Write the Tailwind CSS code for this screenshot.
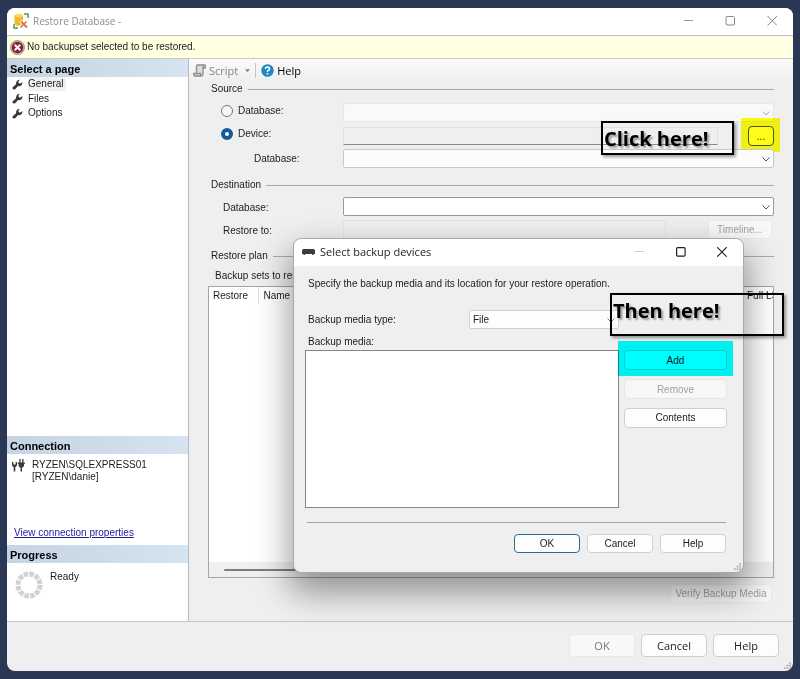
<!DOCTYPE html>
<html lang="en">
<head>
<meta charset="utf-8">
<meta name="viewport" content="width=device-width, initial-scale=1">
<title>Restore Database</title>
<script src="https://cdn.jsdelivr.net/npm/@tailwindcss/browser@4"></script>
</head>
<body class="bg-[#2a3855] font-['Liberation_Sans',Arial,sans-serif] text-[10px] leading-[14px] text-[#1c1c1c]">
<svg class="hidden" aria-hidden="true">
  <symbol id="wrench" viewBox="0 0 12 12"><path d="M.8 9 4.500 5.800C4 3 5.800.7 8.600.7L7 2.600l.4 1.900 1.900.4L11.300 3.300c.4 2.900-1.800 4.900-4.600 4.400L3.400 11.200C1.800 12.300-.4 10.600.8 9z" fill="#383838"/></symbol>
  <symbol id="chevron" viewBox="0 0 10 10"><path d="M1.500 3.500 5 7 8.500 3.500" fill="none" stroke="currentColor"/></symbol>
  <symbol id="grip" viewBox="0 0 10 10"><path d="M7 1h2v2H7zM4 4h2v2H4zM7 4h2v2H7zM1 7h2v2H1zM4 7h2v2H4zM7 7h2v2H7z" fill="#b4b4b4"/></symbol>
</svg>

<div class="relative flex min-h-screen flex-col px-[7px] pt-2 pb-2">
  <main class="flex flex-1 flex-col overflow-hidden rounded-lg bg-[#efefef]">
    <header class="flex h-7 items-center border-b border-[#bdbdbd] bg-white pb-0.5 pl-1.5 font-['Open_Sans','Noto_Sans',sans-serif] text-[#8c8c8c]">
      <svg class="mr-1 h-4 w-4" viewBox="0 0 16 16" aria-hidden="true">
        <path d="M11 1h4v4M1 11v4h4" fill="none" stroke="#4c9a6a" stroke-width="1.500"/>
        <path d="M1.500 2.500v8.500c0 2.200 8.500 2.200 8.500 0V2.500z" fill="#f3b62a"/><ellipse cx="5.750" cy="2.500" rx="4.250" ry="1.700" fill="#ffd75e"/>
        <path d="m7.500 8 6.500 6.500M14 8l-6.500 6.500" stroke="#fff" stroke-width="3.200"/><path d="m8 8.500 6 6" stroke="#e2701e" stroke-width="1.800"/><path d="m13.500 8.500-6 6" stroke="#d07a3a" stroke-width="1.600"/>
      </svg>
      <h1 class="flex-1">Restore Database -</h1>
      <button class="flex w-[42px] justify-center" aria-label="Minimize"><svg class="h-[10px] w-[10px]" viewBox="0 0 10 10"><path d="M1 4.500h9" stroke="#999"/></svg></button>
      <button class="flex w-[42px] justify-center" aria-label="Maximize"><svg class="h-[10px] w-[10px]" viewBox="0 0 10 10"><rect x="1" y=".5" width="8.500" height="8.500" rx="1" fill="none" stroke="#888"/></svg></button>
      <button class="flex w-[42px] justify-center" aria-label="Close"><svg class="h-[10px] w-[10px]" viewBox="0 0 10 10"><path d="m.5 0 9.500 9.500M10 0 .5 9.500" stroke="#888"/></svg></button>
    </header>
    <div role="status" class="flex h-[23px] items-center gap-0.5 border-b border-[#c9c9bd] bg-[#ffffe1] pl-[3px]">
      <svg class="h-[15px] w-[15px]" viewBox="0 0 14 14" aria-hidden="true"><circle cx="7" cy="7" r="6.500" fill="#c9b5b7" stroke="#8b8587" stroke-width=".8"/><circle cx="7" cy="7" r="5.300" fill="#8f1c2c"/><path d="m4.400 4.400 5.200 5.200M9.600 4.400 4.400 9.600" stroke="#fff" stroke-width="1.900"/></svg>
      <p>No backupset selected to be restored.</p>
    </div>

    <div class="flex flex-1">
      <aside class="flex w-[182px] flex-col border-r border-[#b5b9c0] bg-white">
        <h2 class="h-[18px] bg-linear-to-r from-[#c5d4e3] to-[#d6e3f0] pl-[3px] text-[11px] leading-5 font-bold text-black">Select a page</h2>
        <nav class="flex flex-1 flex-col items-start">
          <a href="#general" class="flex items-center gap-[5px] pl-[5px]"><svg class="h-[11px] w-[11px]"><use href="#wrench"/></svg><span class="bg-[#f0f0f0] pr-0.5">General</span></a>
          <a href="#files" class="flex items-center gap-[5px] pl-[5px] leading-[15px]"><svg class="h-[11px] w-[11px]"><use href="#wrench"/></svg>Files</a>
          <a href="#options" class="flex items-center gap-[5px] pl-[5px]"><svg class="h-[11px] w-[11px]"><use href="#wrench"/></svg>Options</a>
        </nav>
        <section class="flex h-[109px] flex-col">
          <h2 class="h-[18px] bg-linear-to-r from-[#c5d4e3] to-[#d6e3f0] pl-[3px] text-[11px] leading-5 font-bold text-black">Connection</h2>
          <div class="flex flex-1 gap-[7px] pt-[5px] pl-[5px] leading-3">
            <svg class="h-[13px] w-[13px]" viewBox="0 0 13 13" aria-hidden="true"><path d="M0 3h1.400v2.500h2.200V3H5v3.500L3.300 8.300V12.500H1.700V8.300L0 6.500zM5.800 3.500h7V5H12v2.300L10 8.800v3.700H8.500V8.800L6.600 7.300V5h-.8zM7.300 0h1.300v3.500H7.300zM10.200 0h1.300v3.500h-1.300z" fill="#3a3a3a"/></svg>
            <p>RYZEN\SQLEXPRESS01<br>[RYZEN\danie]</p>
          </div>
          <a href="#connection" class="mb-[5px] self-start pl-[7px] text-[#1c1c96] underline">View connection properties</a>
        </section>
        <section class="h-[76px]">
          <h2 class="h-[18px] bg-linear-to-r from-[#c5d4e3] to-[#d6e3f0] pl-[3px] text-[11px] leading-5 font-bold text-black">Progress</h2>
          <div class="flex gap-[7px] pt-[7px] pl-2">
            <svg class="mt-px h-7 w-7" viewBox="0 0 28 28" aria-hidden="true"><circle cx="14" cy="14" r="11" fill="none" stroke="#d2d2d2" stroke-width="5" stroke-dasharray="4.560 1.200"/></svg>
            <p>Ready</p>
          </div>
        </section>
      </aside>

      <section class="flex flex-1 flex-col">
        <div class="flex h-[23px] items-center bg-linear-to-b from-[#fafafa] to-[#efefef] pl-1 font-['Open_Sans','Noto_Sans',sans-serif] text-[11px] text-[#858585]" role="toolbar">
          <button class="flex items-center gap-[3px]"><svg class="h-[13px] w-[13px]" viewBox="0 0 13 13" aria-hidden="true"><path d="M3.500 9V2.500Q3.500 1 5 1h6.500Q10 1.500 10 3v7.500Q10 12 8.500 12H2Q.7 12 .7 10.500V9.500H7.500Q7.500 12 8.800 12M10 4h2.500V2.200Q12.500 1 11.500 1" fill="#dcdcdc" stroke="#8c8c8c" stroke-width="1.300"/></svg>Script</button>
          <svg class="ml-[7px] h-[5px] w-[5px]" viewBox="0 0 6 6" aria-hidden="true"><path d="M0 1.500h6L3 5z" fill="#888"/></svg>
          <span class="mx-[5px] h-[15px] w-px bg-[#c4c4c4]"></span>
          <button class="flex items-center gap-[3px] text-black"><svg class="h-[13px] w-[13px]" viewBox="0 0 13 13" aria-hidden="true"><circle cx="6.500" cy="6.500" r="6.300" fill="#2289c2"/><path d="M4.500 5Q4.500 3 6.500 3t2 1.900Q8.500 5.900 6.500 6.900V8" fill="none" stroke="#fff" stroke-width="1.500"/><path d="M5.700 9h1.600v1.500H5.700z" fill="#fff"/></svg>Help</button>
        </div>

        <div class="flex flex-1 flex-col pr-[19px] pb-[18px] pl-[19px]">
          <h3 class="flex items-center gap-[5px] pl-[3px]">Source<span class="h-px flex-1 bg-[#ababab]"></span></h3>
          <div class="grid grid-cols-[135px_1fr] items-center gap-y-1 pt-[7px]">
            <label for="src-db" class="flex items-center gap-[5px] pb-1 pl-[13px]"><input id="src-db" name="source" type="radio" class="h-3 w-3 appearance-none rounded-full border border-[#777] bg-[#f6f6f6]">Database:</label>
            <div class="relative h-[19px]"><select aria-label="Source database" disabled class="h-full w-full appearance-none rounded-xs border border-[#e8e8e8] bg-[#f9f9f9]"></select><svg class="absolute top-[5px] right-[3px] h-[10px] w-[10px] text-[#aaa]"><use href="#chevron"/></svg></div>

            <label for="src-dev" class="flex items-center gap-[5px] pb-1 pl-[13px]"><input id="src-dev" name="source" type="radio" checked class="h-3 w-3 appearance-none rounded-full border-4 border-[#15599c] bg-white">Device:</label>
            <div class="flex h-[19px] items-center">
              <input aria-label="Device" readonly class="h-[18px] min-w-0 flex-1 border border-[#e2e2e2] border-b-[#8a8a8a] bg-[#efefef]">
              <div class="relative ml-[30px] h-5">
                <button class="h-5 w-[26px] rounded border border-[#4a5a4a] bg-[#fdfdfd] pt-0.5" aria-label="Browse devices">...</button>
                <span class="pointer-events-none absolute -top-2 -right-[6px] -bottom-[6px] -left-[7px] bg-[#ffff00]/90 mix-blend-multiply"></span>
              </div>
            </div>

            <label for="dev-db" class="pl-[46px]">Database:</label>
            <div class="relative h-[19px]"><select id="dev-db" class="h-full w-full appearance-none rounded-xs border border-[#c9c9c9] bg-[#fcfcfc]"></select><svg class="absolute top-[5px] right-[3px] h-[10px] w-[10px] text-[#555]"><use href="#chevron"/></svg></div>
          </div>

          <h3 class="mt-[10px] flex items-center gap-[5px] pl-[3px]">Destination<span class="h-px flex-1 bg-[#ababab]"></span></h3>
          <div class="grid grid-cols-[135px_1fr] items-center gap-y-1 pt-[5px]">
            <label for="dest-db" class="pt-0.5 pl-[15px]">Database:</label>
            <div class="relative h-[19px]"><select id="dest-db" class="h-full w-full appearance-none rounded-xs border border-[#999] bg-white"></select><svg class="absolute top-[5px] right-[3px] h-[10px] w-[10px] text-[#555]"><use href="#chevron"/></svg></div>
            <label for="restore-to" class="pt-0.5 pl-[15px]">Restore to:</label>
            <div class="flex h-[19px] items-center gap-[42px]">
              <input id="restore-to" readonly class="h-full min-w-0 flex-1 border border-[#e4e4e4] bg-[#efefef]">
              <button disabled class="mr-0.5 h-[19px] w-[64px] rounded border border-[#eaeaea] bg-[#f8f8f8] text-[#a0a0a0]">Timeline...</button>
            </div>
          </div>

          <h3 class="mt-[10px] flex items-center gap-[5px] pl-[3px]">Restore plan<span class="h-px flex-1 bg-[#ababab]"></span></h3>
          <p class="mt-1.5 pl-[7px]">Backup sets to restore:</p>
          <div class="mt-[3px] flex flex-1 flex-col overflow-hidden border border-[#a5a5a5] bg-white">
            <table class="w-full table-fixed text-left">
              <thead><tr class="h-[18px]">
                <th class="w-[49px] border-r border-[#e2e2e2] pl-1 font-normal">Restore</th>
                <th class="pl-[5px] font-normal">Name</th>
                <th class="w-[26px] font-normal whitespace-nowrap">Full LSN</th>
              </tr></thead>
            </table>
            <div class="mt-auto flex h-[15px] items-center bg-[#efefef] pr-[60px] pl-[15px]"><span class="h-0.5 flex-1 rounded bg-[#7c7c7c]"></span></div>
          </div>
          <button disabled class="mt-1.5 mr-0.5 h-[19px] w-[102px] self-end rounded border border-[#eaeaea] bg-[#f6f6f6] text-[#a0a0a0]">Verify Backup Media</button>
        </div>
      </section>
    </div>

    <footer class="relative flex h-[50px] items-center justify-end gap-1.5 border-t border-[#c4c4c4] pr-[14px] pb-0.5 font-['Open_Sans','Noto_Sans',sans-serif] text-[11px]">
      <button disabled class="h-[23px] w-[66px] rounded border border-[#e8e8e8] bg-[#f8f8f8] text-[#777]">OK</button>
      <button class="h-[23px] w-[66px] rounded border border-[#cfcfcf] bg-[#fdfdfd]">Cancel</button>
      <button class="h-[23px] w-[66px] rounded border border-[#cfcfcf] bg-[#fdfdfd]">Help</button>
      <svg class="absolute right-px bottom-px h-[9px] w-[9px]" aria-hidden="true"><use href="#grip"/></svg>
    </footer>
  </main>

  <div role="dialog" aria-labelledby="dlg-title" class="absolute top-[238px] right-[56px] left-[293px] flex flex-col rounded-lg border border-[#a9a9a9] bg-[#efefef] shadow-[0_16px_32px_4px_rgba(0,0,0,0.38)]">
    <header class="flex h-[27px] items-center rounded-t-lg bg-white pr-px pb-px pl-2 font-['Open_Sans','Noto_Sans',sans-serif] text-[11px]">
      <svg class="mr-[5px] h-[6px] w-[13px]" viewBox="0 0 13 6" aria-hidden="true"><path d="M1 0h11l1 1.500V5h-1.500v1H10V5H3v1H1.500V5H0V1.500z" fill="#3c3c3c"/></svg>
      <h2 id="dlg-title" class="flex-1">Select backup devices</h2>
      <button class="flex w-[41px] justify-center" aria-label="Minimize"><svg class="h-[10px] w-[10px]" viewBox="0 0 10 10"><path d="M0 4.500h9" stroke="#ccc"/></svg></button>
      <button class="flex w-[41px] justify-center" aria-label="Maximize"><svg class="h-[10px] w-[10px]" viewBox="0 0 10 10"><rect x=".6" y=".6" width="8.500" height="8.500" rx="1" fill="none" stroke="#222" stroke-width="1.200"/></svg></button>
      <button class="flex w-[41px] justify-center" aria-label="Close"><svg class="h-[10px] w-[10px]" viewBox="0 0 10 10"><path d="m.2.200 9.500 9.500M9.700.2.200 9.700" stroke="#222" stroke-width="1.100"/></svg></button>
    </header>
    <div class="flex flex-col pt-[11px] pr-4 pb-[19px] pl-[11px]">
      <p class="pl-[3px]">Specify the backup media and its location for your restore operation.</p>
      <div class="mt-[19px] flex items-center pl-[3px]">
        <label for="media-type" class="w-[161px]">Backup media type:</label>
        <div class="relative h-[19px] w-[150px]"><select id="media-type" class="h-full w-full appearance-none rounded-xs border border-[#d0d0d0] bg-[#fdfdfd] pl-[3px]"><option>File</option></select><svg class="absolute top-[5px] right-[3px] h-[10px] w-[10px] text-[#777]"><use href="#chevron"/></svg></div>
      </div>
      <label for="media" class="mt-[6px] pl-[3px]">Backup media:</label>
      <div class="mt-px flex gap-[5px]">
        <select id="media" size="8" class="h-[158px] min-w-0 flex-1 appearance-none border border-[#858585] bg-white"></select>
        <div class="flex w-[103px] flex-col gap-[9px]">
          <div class="relative h-5">
            <button class="h-5 w-full rounded border border-[#d0d0d0] bg-[#fdfdfd] pt-px">Add</button>
            <span class="pointer-events-none absolute -top-[9px] -right-[6px] -bottom-[6px] -left-[6px] bg-[#00ffff] mix-blend-multiply"></span>
          </div>
          <button disabled class="h-5 rounded border border-[#e6e6e6] bg-[#f7f7f7] pt-px text-[#a0a0a0]">Remove</button>
          <button class="h-5 rounded border border-[#cfcfcf] bg-[#fdfdfd]">Contents</button>
        </div>
      </div>
      <hr class="mt-[14px] mr-px ml-0.5 border-[#a5a5a5]">
      <div class="mt-[11px] mr-px flex justify-end gap-[7px]">
        <button class="h-[19px] w-[66px] rounded border border-[#236f93] bg-[#fdfdfd]">OK</button>
        <button class="h-[19px] w-[66px] rounded border border-[#d0d0d0] bg-[#fdfdfd]">Cancel</button>
        <button class="h-[19px] w-[66px] rounded border border-[#d0d0d0] bg-[#fdfdfd]">Help</button>
      </div>
    </div>
    <svg class="absolute right-px bottom-px h-[9px] w-[9px]" aria-hidden="true"><use href="#grip"/></svg>
  </div>

  <p class="absolute top-[121px] right-[66px] h-[34px] w-[133px] border-2 border-black pl-px font-['Open_Sans','Noto_Sans',sans-serif] text-[20px] leading-8 font-bold text-black shadow-[2px_2px_3px_rgba(0,0,0,0.4)] text-shadow-[2px_2px_2px_rgba(0,0,0,0.35)]">Click here!</p>
  <p class="absolute top-[293px] right-[16px] h-[43px] w-[174px] border-2 border-black pl-px font-['Open_Sans','Noto_Sans',sans-serif] text-[20px] leading-8 font-bold text-black shadow-[2px_2px_3px_rgba(0,0,0,0.4)] text-shadow-[2px_2px_2px_rgba(0,0,0,0.35)]">Then here!</p>
</div>
</body>
</html>
